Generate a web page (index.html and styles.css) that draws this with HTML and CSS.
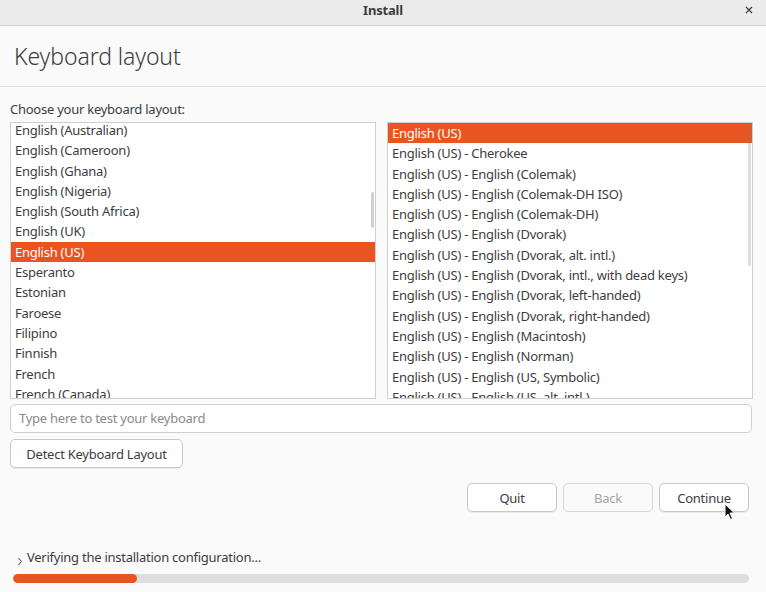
FILE: index.html
```html
<!DOCTYPE html>
<html>
<head>
<meta charset="utf-8">
<link rel="stylesheet" href="styles.css">
</head>
<body>
<div class="window">
  <div class="titlebar">
    <span class="title">Install</span>
    <span class="close">
      <svg width="10" height="10" viewBox="0 0 10 10"><path d="M2 2 L8 8 M8 2 L2 8" stroke="#3d3d3d" stroke-width="1.2" fill="none"/></svg>
    </span>
  </div>
  <div class="header"><h1>Keyboard layout</h1></div>
  <div class="content">
    <div class="label">Choose your keyboard layout:</div>
    <div class="lists">
      <div class="list">
        <div class="rows left-rows">
          <div class="row">English (Australian)</div>
          <div class="row">English (Cameroon)</div>
          <div class="row">English (Ghana)</div>
          <div class="row">English (Nigeria)</div>
          <div class="row">English (South Africa)</div>
          <div class="row">English (UK)</div>
          <div class="row selected">English (US)</div>
          <div class="row">Esperanto</div>
          <div class="row">Estonian</div>
          <div class="row">Faroese</div>
          <div class="row">Filipino</div>
          <div class="row">Finnish</div>
          <div class="row">French</div>
          <div class="row">French (Canada)</div>
        </div>
        <div class="scrollbar sb-left"></div>
      </div>
      <div class="list">
        <div class="rows">
          <div class="row selected">English (US)</div>
          <div class="row">English (US) - Cherokee</div>
          <div class="row">English (US) - English (Colemak)</div>
          <div class="row">English (US) - English (Colemak-DH ISO)</div>
          <div class="row">English (US) - English (Colemak-DH)</div>
          <div class="row">English (US) - English (Dvorak)</div>
          <div class="row">English (US) - English (Dvorak, alt. intl.)</div>
          <div class="row">English (US) - English (Dvorak, intl., with dead keys)</div>
          <div class="row">English (US) - English (Dvorak, left-handed)</div>
          <div class="row">English (US) - English (Dvorak, right-handed)</div>
          <div class="row">English (US) - English (Macintosh)</div>
          <div class="row">English (US) - English (Norman)</div>
          <div class="row">English (US) - English (US, Symbolic)</div>
          <div class="row">English (US) - English (US, alt. intl.)</div>
        </div>
        <div class="scrollbar sb-right"></div>
      </div>
    </div>
    <div class="input">Type here to test your keyboard</div>
    <div class="detect-row"><div class="btn detect">Detect Keyboard Layout</div></div>
    <div class="actions">
      <div class="btn action">Quit</div>
      <div class="btn action disabled">Back</div>
      <div class="btn action">Continue</div>
    </div>
  </div>
  <div class="status">
    <div class="status-line">
      <svg class="chevron" width="6" height="9" viewBox="0 0 6 9"><path d="M1.5 1 L4.5 4.5 L1.5 8" stroke="#3d3d3d" stroke-width="1" fill="none"/></svg>
      <span>Verifying the installation configuration...</span>
    </div>
    <div class="progress"><div class="fill" style="width:124px"></div></div>
  </div>
  <svg class="cursor" width="12" height="18" viewBox="0 0 12 18"><path d="M1 1 L1 14 L4 11 L6.5 16.5 L8.5 15.5 L6 10 L10.5 10 Z" fill="#111" stroke="#fff" stroke-width="1"/></svg>
</div>
</body>
</html>
```
FILE: styles.css
```css
* { box-sizing: border-box; }
html, body { margin: 0; padding: 0; }
body {
  width: 766px;
  height: 592px;
  overflow: hidden;
  background: #fafafa;
  font-family: "Noto Sans", "DejaVu Sans", sans-serif;
  color: #3d3d3d;
  font-size: 13px;
  letter-spacing: -0.25px;
}
.window { position: relative; width: 766px; height: 592px; }
.titlebar {
  height: 26px;
  background: #ebebeb;
  border-bottom: 1px solid #d4d4d4;
  display: flex;
  align-items: center;
  justify-content: center;
  position: relative;
}
.title { font-weight: bold; font-size: 13px; color: #3d3d3d; margin-top: -5px; letter-spacing: -0.2px; }
.close {
  position: absolute;
  right: 10px;
  top: 3px;
  width: 14px;
  height: 14px;
  display: flex;
  align-items: center;
  justify-content: center;
}
.header {
  height: 61px;
  border-bottom: 1px solid #e2e2e2;
  padding-left: 14px;
  display: flex;
  align-items: flex-start;
}
.header h1 {
  margin: 15px 0 0 0;
  font-weight: 300;
  font-size: 23px;
  color: #3d3d3d;
  line-height: 30px;
  letter-spacing: -0.1px;
}
.content { padding: 0 13px 0 10px; }
.label { margin-top: 14px; height: 17px; line-height: 17px; font-size: 13px; }
.lists {
  margin-top: 4px;
  display: grid;
  grid-template-columns: 366px 366px;
  column-gap: 11px;
}
.list {
  position: relative;
  height: 277px;
  border: 1px solid #cfcfcf;
  background: #ffffff;
  overflow: hidden;
}
.rows { padding: 0; }
.left-rows { margin-top: -3px; }
.row {
  height: 20.3px;
  line-height: 20.3px;
  padding-left: 4px;
  white-space: nowrap;
  color: #3d3d3d;
}
.row.selected { background: #e95420; color: #ffffff; }
.scrollbar {
  position: absolute;
  width: 3px;
  right: 1px;
  border-radius: 2px;
  background: rgba(120,120,120,0.35);
}
.sb-left { top: 69px; height: 36px; }
.sb-right { top: 0px; height: 143px; background: rgba(120,120,120,0.25); }
.input {
  margin-top: 5px;
  height: 29px;
  width: 742px;
  border: 1px solid #cfcfcf;
  border-radius: 5px;
  background: #ffffff;
  color: #8a8a8a;
  padding-left: 8px;
  line-height: 27px;
}
.detect-row { margin-top: 6px; display: flex; }
.btn {
  height: 29px;
  border: 1px solid #cdc7c2;
  border-radius: 5px;
  background: #ffffff;
  display: flex;
  align-items: center;
  justify-content: center;
  color: #3d3d3d;
  box-shadow: 0 1px 0 rgba(0,0,0,0.06);
}
.detect { width: 173px; }
.actions {
  margin-top: 15px;
  display: flex;
  justify-content: flex-end;
  gap: 6px;
  padding-right: 4px;
}
.action { width: 90px; }
.btn.disabled { background: #fafafa; color: #a5a5a5; border-color: #dad6d2; box-shadow: none; }
.status {
  position: absolute;
  left: 0;
  right: 0;
  top: 547px;
}
.status-line {
  display: flex;
  align-items: center;
  padding-left: 17px;
  height: 20px;
}
.chevron { margin-top: 8px; margin-right: 4px; }
.progress {
  margin: 7px 0 0 13px;
  width: 736px;
  height: 9px;
  border-radius: 5px;
  background: #dedede;
  overflow: hidden;
}
.fill { height: 9px; background: #e95420; border-radius: 5px; }
.cursor { position: absolute; left: 724px; top: 503px; }
```
